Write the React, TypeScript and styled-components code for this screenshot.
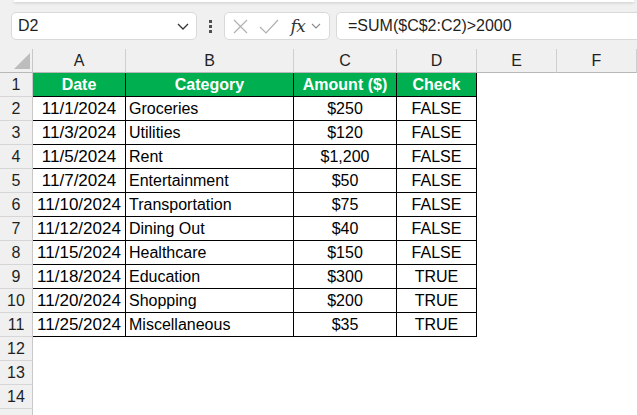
import React from "react";
import styled, { createGlobalStyle } from "styled-components";

const Global = createGlobalStyle`
  html, body { margin: 0; padding: 0; background: #ffffff; }
  body { font-family: "Liberation Sans", Arial, sans-serif; overflow: hidden; }
  * { box-sizing: border-box; }
`;

const Page = styled.div`
  width: 637px;
  height: 415px;
  overflow: hidden;
  background: #ffffff;
  display: flex;
  flex-direction: column;
`;

const Top = styled.div`
  background: #f0f0f0;
  height: 49px;
  flex: none;
  display: flex;
  flex-direction: column;
`;

const RibbonEdge = styled.div`
  height: 2px;
  margin: 0 3px 0 14px;
  background: #ffffff;
  box-shadow: 0 1px 3px rgba(0, 0, 0, 0.18);
`;

const BarRow = styled.div`
  display: flex;
  align-items: center;
  padding: 10px 0 0 11px;
`;

const Box = styled.div<{ $w?: number; $grow?: boolean }>`
  height: 28px;
  background: #ffffff;
  border: 1px solid #d9d9d9;
  border-radius: 5px;
  display: flex;
  align-items: center;
  ${(p) => (p.$w ? `width: ${p.$w}px; flex: none;` : "")}
  ${(p) => (p.$grow ? `flex: 1; margin-right: -8px;` : "")}
`;

const NameText = styled.span`
  flex: 1;
  padding-left: 6px;
  font-size: 16px;
  color: #1f1f1f;
`;

const Chev = styled.svg`
  flex: none;
  margin-right: 6px;
`;

const Dots = styled.div`
  width: 27px;
  display: flex;
  flex-direction: column;
  align-items: center;
  gap: 2px;
  span {
    width: 3px;
    height: 3px;
    background: #505050;
  }
`;

const IconSlot = styled.div<{ $w: number; $ml?: number }>`
  width: ${(p) => p.$w}px;
  margin-left: ${(p) => p.$ml ?? 0}px;
  display: flex;
  align-items: center;
  justify-content: center;
  flex: none;
`;

const Fx = styled.span`
  font-family: "DejaVu Serif", "Liberation Serif", serif;
  font-style: italic;
  font-size: 17px;
  color: #333333;
  letter-spacing: -0.5px;
`;

const Gap = styled.div`
  width: 6px;
  flex: none;
`;

const Formula = styled.span`
  padding-left: 11px;
  font-size: 16px;
  color: #1f1f1f;
`;

const COLS = [33, 93, 168, 103, 80, 80, 80];

const Grid = styled.div`
  display: grid;
  flex: none;
  grid-template-columns: ${COLS.map((c) => c + "px").join(" ")};
  grid-auto-rows: 24px;
  grid-template-rows: 24px;
`;

const Corner = styled.div`
  background: #f0f0f0;
  border-right: 1px solid #c8c8c8;
  border-bottom: 1px solid #b8b8b8;
  position: relative;
  &::after {
    content: "";
    position: absolute;
    right: 2px;
    bottom: 3px;
    width: 0;
    height: 0;
    border-left: 16px solid transparent;
    border-bottom: 16px solid #bdbdbd;
  }
`;

const ColHead = styled.div`
  background: #f0f0f0;
  border-right: 1px solid #cfcfcf;
  border-bottom: 1px solid #b8b8b8;
  display: flex;
  align-items: center;
  justify-content: center;
  font-size: 16px;
  color: #1f1f1f;
  padding-top: 1px;
`;

const RowHead = styled.div`
  background: #f0f0f0;
  border-right: 1px solid #c8c8c8;
  border-bottom: 1px solid #d6d6d6;
  display: flex;
  align-items: center;
  justify-content: center;
  font-size: 16px;
  color: #1f1f1f;
`;

const HeadCell = styled.div`
  background: #00b050;
  color: #ffffff;
  font-weight: bold;
  font-size: 16px;
  display: flex;
  align-items: center;
  justify-content: center;
  border-right: 1px solid #000000;
  border-bottom: 1px solid #000000;
  white-space: nowrap;
`;

const Cell = styled.div<{ $align: "left" | "center" }>`
  font-size: 16px;
  color: #000000;
  display: flex;
  align-items: center;
  justify-content: ${(p) => (p.$align === "left" ? "flex-start" : "center")};
  padding: 0 3px;
  border-right: 1px solid #000000;
  border-bottom: 1px solid #000000;
  white-space: nowrap;
`;

const DateText = styled.span`
  font-size: 17px;
`;

const Empty = styled.div``;

const data = [
  ["11/1/2024", "Groceries", "$250", "FALSE"],
  ["11/3/2024", "Utilities", "$120", "FALSE"],
  ["11/5/2024", "Rent", "$1,200", "FALSE"],
  ["11/7/2024", "Entertainment", "$50", "FALSE"],
  ["11/10/2024", "Transportation", "$75", "FALSE"],
  ["11/12/2024", "Dining Out", "$40", "FALSE"],
  ["11/15/2024", "Healthcare", "$150", "FALSE"],
  ["11/18/2024", "Education", "$300", "TRUE"],
  ["11/20/2024", "Shopping", "$200", "TRUE"],
  ["11/25/2024", "Miscellaneous", "$35", "TRUE"],
];

const aligns: ("left" | "center")[] = ["center", "left", "center", "center"];

export default function App() {
  return (
    <Page>
      <Global />
      <Top>
        <RibbonEdge />
        <BarRow>
          <Box $w={186}>
            <NameText>D2</NameText>
            <Chev width="14" height="14" viewBox="0 0 14 14">
              <path d="M2 5 L7 10 L12 5" fill="none" stroke="#333" strokeWidth="1.3" />
            </Chev>
          </Box>
          <Dots>
            <span />
            <span />
            <span />
          </Dots>
          <Box $w={106}>
            <IconSlot $w={16} $ml={7}>
              <svg width="15" height="15" viewBox="0 0 15 15">
                <path d="M1 1 L14 14 M14 1 L1 14" stroke="#b0b0b0" strokeWidth="1.2" fill="none" />
              </svg>
            </IconSlot>
            <IconSlot $w={22} $ml={10}>
              <svg width="20" height="15" viewBox="0 0 20 15">
                <path d="M1 8 L7 14 L19 1" stroke="#b0b0b0" strokeWidth="1.2" fill="none" />
              </svg>
            </IconSlot>
            <IconSlot $w={20} $ml={8}>
              <Fx>fx</Fx>
            </IconSlot>
            <IconSlot $w={12} $ml={2}>
              <svg width="10" height="10" viewBox="0 0 10 10">
                <path d="M1 3 L5 7 L9 3" fill="none" stroke="#8a8a8a" strokeWidth="1.1" />
              </svg>
            </IconSlot>
          </Box>
          <Gap />
          <Box $grow>
            <Formula>=SUM($C$2:C2)&gt;2000</Formula>
          </Box>
        </BarRow>
      </Top>
      <Grid>
        <Corner />
        {["A", "B", "C", "D", "E", "F"].map((l) => (
          <ColHead key={l}>{l}</ColHead>
        ))}
        <RowHead>1</RowHead>
        {["Date", "Category", "Amount ($)", "Check"].map((h) => (
          <HeadCell key={h}>{h}</HeadCell>
        ))}
        <Empty />
        <Empty />
        {data.map((row, i) => (
          <React.Fragment key={i}>
            <RowHead>{i + 2}</RowHead>
            {row.map((v, j) => (
              <Cell key={j} $align={aligns[j]}>
                {j === 0 ? <DateText>{v}</DateText> : v}
              </Cell>
            ))}
            <Empty />
            <Empty />
          </React.Fragment>
        ))}
        {[12, 13, 14, 0].map((n) => (
          <React.Fragment key={n}>
            <RowHead>{n ? n : ""}</RowHead>
            <Empty />
            <Empty />
            <Empty />
            <Empty />
            <Empty />
            <Empty />
          </React.Fragment>
        ))}
      </Grid>
    </Page>
  );
}
